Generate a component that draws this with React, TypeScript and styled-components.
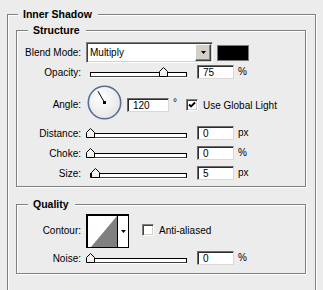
import React from 'react';
import styled, { createGlobalStyle } from 'styled-components';

const GlobalStyle = createGlobalStyle`
  html, body {
    margin: 0;
    padding: 0;
    background: #ececec;
  }
  body {
    font-family: 'Liberation Sans', Arial, sans-serif;
    font-size: 10px;
    color: #000;
  }
`;

const Page = styled.div`
  box-sizing: border-box;
  width: 323px;
  height: 290px;
  overflow: hidden;
  padding: 8px 0 0 7px;
`;

// etched group box, like the old windows fieldsets
const Group = styled.fieldset<{ $width: number; $height: number; $pad: string; $gap?: number }>`
  box-sizing: border-box;
  width: ${p => p.$width}px;
  height: ${p => p.$height}px;
  min-width: 0;
  margin: ${p => p.$gap || 0}px 0 0 0;
  padding: ${p => p.$pad};
  border: 1px solid #808080;
  box-shadow: inset 1px 1px 0 #fff, 1px 1px 0 #fff;
`;

const Title = styled.legend<{ $inset: number }>`
  margin-left: ${p => p.$inset}px;
  padding: 0 6px 0 5px;
  font-size: 10.5px;
  font-weight: bold;
  line-height: 13px;
  background: #ececec;
`;

const Row = styled.div<{ $h: number; $top?: boolean }>`
  display: flex;
  align-items: ${p => (p.$top ? 'flex-start' : 'center')};
  height: ${p => p.$h}px;
`;

const Label = styled.div<{ $top?: number }>`
  flex: none;
  width: 56px;
  margin: ${p => p.$top || 0}px 5px 0 0;
  text-align: right;
  white-space: nowrap;
`;

const Select = styled.div`
  box-sizing: border-box;
  display: flex;
  width: 127px;
  height: 21px;
  border: 1px solid;
  border-color: #808080 #fff #fff #808080;
  box-shadow: inset 1px 1px 0 #404040, inset -1px -1px 0 #d4d0c8;
  background: #fff;
`;

const SelectValue = styled.div`
  flex: 1;
  padding: 4px 0 0 3px;
  font-size: 10px;
`;

const SelectButton = styled.div`
  box-sizing: border-box;
  display: flex;
  align-items: center;
  justify-content: center;
  width: 16px;
  margin: 1px 1px 1px 0;
  background: #d4d0c8;
  border: 1px solid;
  border-color: #fff #404040 #404040 #fff;
  box-shadow: inset -1px -1px 0 #808080;
`;

const Swatch = styled.div`
  box-sizing: border-box;
  width: 32px;
  height: 16px;
  margin-left: 4px;
  background: #000;
  border: 1px solid #7a7a7a;
`;

const Slider = styled.div`
  position: relative;
  flex: none;
  width: 104px;
  height: 11px;
`;

const Track = styled.div`
  box-sizing: border-box;
  height: 5px;
  margin: 5px 3px 0 4px;
  background: #fff;
  border: 1px solid #000;
  border-bottom-color: #404040;
  box-shadow: 0 1px 0 #fff;
`;

const Thumb = styled.svg`
  position: absolute;
  top: 0;
  display: block;
`;

const Field = styled.div<{ $w: number; $gap: number }>`
  box-sizing: border-box;
  flex: none;
  width: ${p => p.$w}px;
  height: 14px;
  margin-left: ${p => p.$gap}px;
  padding: 1px 0 0 5px;
  background: #fff;
  border: 1px solid;
  border-color: #6b6b6b #d8d8d8 #d8d8d8 #6b6b6b;
  box-shadow: inset 1px 1px 0 #2b2b2b;
  font-size: 10px;
  line-height: 11px;
`;

const Unit = styled.span<{ $up?: number }>`
  margin: -${p => p.$up || 2}px 0 0 4px;
`;

const Dial = styled.svg`
  flex: none;
  display: block;
  margin: 4px 0 0 1px;
`;

const AngleControls = styled.div`
  display: flex;
  align-items: center;
  margin-top: 17px;
`;

const Check = styled.div<{ $gap: number }>`
  box-sizing: border-box;
  display: flex;
  align-items: center;
  justify-content: center;
  flex: none;
  width: 12px;
  height: 12px;
  margin-left: ${p => p.$gap}px;
  background: #fff;
  border: 1px solid;
  border-color: #808080 #fff #fff #808080;
  box-shadow: inset 1px 1px 0 #404040, inset -1px -1px 0 #d4d0c8;
`;

const CheckText = styled.span`
  margin-left: 5px;
  white-space: nowrap;
`;

const Contour = styled.div`
  box-sizing: border-box;
  display: flex;
  flex: none;
  width: 43px;
  height: 34px;
  margin-top: 1px;
  border: 1px solid #000;
  border-left-width: 2px;
  border-top-width: 2px;
  background: #fff;
`;

const ContourArrow = styled.div`
  display: flex;
  align-items: center;
  justify-content: center;
  flex: 1;
  border-left: 1px solid #000;
`;

const DownArrow = () => (
  <svg width="5" height="3" viewBox="0 0 5 3">
    <path d="M0 0h5L2.5 3z" fill="#000" />
  </svg>
);

const Tick = () => (
  <svg width="8" height="8" viewBox="0 0 8 8">
    <path d="M1 3.5l2 2L7 1.5" fill="none" stroke="#000" strokeWidth="1.8" />
  </svg>
);

const SliderInput = ({ value, max = 100 }: { value: number; max?: number }) => (
  <Slider>
    <Track />
    <Thumb width="9" height="10" viewBox="0 0 9 10" style={{ left: (value / max) * 97 }}>
      <path d="M0.5 9.5V4.5L4.5 0.5L8.5 4.5V9.5Z" fill="#f2f2f2" stroke="#000" />
    </Thumb>
  </Slider>
);

const SliderRow = ({ label, value, unit }: { label: string; value: number; unit: string }) => (
  <Row $h={20}>
    <Label>{label}</Label>
    <SliderInput value={value} />
    <Field $w={37} $gap={7}>{value}</Field>
    <Unit>{unit}</Unit>
  </Row>
);

export default function App() {
  const angle = 120;
  const rad = (angle * Math.PI) / 180;

  return (
    <Page>
      <GlobalStyle />
      <Group $width={309} $height={330} $pad="3px 9px 0 8px">
        <Title $inset={2}>Inner Shadow</Title>

        <Group $width={290} $height={163} $pad="5px 8px 0 8px">
          <Title $inset={3}>Structure</Title>

          <Row $h={21}>
            <Label>Blend Mode:</Label>
            <Select>
              <SelectValue>Multiply</SelectValue>
              <SelectButton>
                <DownArrow />
              </SelectButton>
            </Select>
            <Swatch />
          </Row>

          <Row $h={18}>
            <Label>Opacity:</Label>
            <SliderInput value={75} />
            <Field $w={37} $gap={7}>75</Field>
            <Unit>%</Unit>
          </Row>

          <Row $h={42} $top>
            <Label $top={18}>Angle:</Label>
            <Dial width="35" height="35" viewBox="0 0 35 35">
              <defs>
                <radialGradient id="dialFill" cx="40%" cy="35%" r="70%">
                  <stop offset="0" stopColor="#ffffff" />
                  <stop offset="1" stopColor="#e4e4e4" />
                </radialGradient>
              </defs>
              <circle cx="17.5" cy="17.5" r="16.2" fill="url(#dialFill)" stroke="#5b6c99" strokeWidth="1.6" />
              <line
                x1="17.5"
                y1="17.5"
                x2={17.5 + Math.cos(rad) * 13}
                y2={17.5 - Math.sin(rad) * 13}
                stroke="#000"
                strokeWidth="1"
              />
              <rect x="16" y="16" width="3" height="3" fill="#000" />
            </Dial>
            <AngleControls>
              <Field $w={42} $gap={5}>{angle}</Field>
              <Unit $up={6}>°</Unit>
              <Check $gap={9}>
                <Tick />
              </Check>
              <CheckText>Use Global Light</CheckText>
            </AngleControls>
          </Row>

          <SliderRow label="Distance:" value={0} unit="px" />
          <SliderRow label="Choke:" value={0} unit="%" />
          <SliderRow label="Size:" value={5} unit="px" />
        </Group>

        <Group $width={290} $height={76} $pad="1px 8px 0 8px" $gap={11}>
          <Title $inset={3}>Quality</Title>

          <Row $h={36}>
            <Label>Contour:</Label>
            <Contour>
              <svg width="29" height="31" viewBox="0 0 29 31">
                <path d="M3 31L29 0V31Z" fill="#808080" />
              </svg>
              <ContourArrow>
                <DownArrow />
              </ContourArrow>
            </Contour>
            <Check $gap={13} />
            <CheckText>Anti-aliased</CheckText>
          </Row>

          <SliderRow label="Noise:" value={0} unit="%" />
        </Group>
      </Group>
    </Page>
  );
}
